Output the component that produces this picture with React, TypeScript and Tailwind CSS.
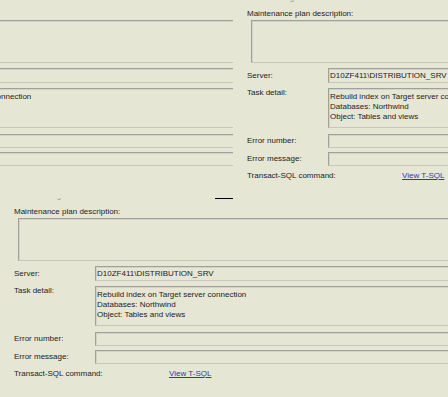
const Box = ({ className = "", children }: { className?: string; children?: React.ReactNode }) => (
    <div
        className={`border-t border-l border-b border-t-[#a1a19a] border-l-[#a1a19a] border-b-[#c7c7be] shadow-[inset_1px_1px_0_#d2d2c8] ${className}`}
    >
        {children}
    </div>
);

const Form = ({ mark = false }: { mark?: boolean }) => {
    return (
        <div className="w-[448px] shrink-0 h-full flex flex-col whitespace-nowrap text-[8px] leading-[10px] text-[#1c1c1c] font-['Liberation_Sans',Arial,sans-serif]">
            <div className="h-[3px] overflow-hidden flex items-end pl-[10px]">
                <span className="w-[205px] shrink-0 leading-[10px] text-[#9a9a94]">Databases log file</span>
                {mark && <div className="w-[18px] h-px bg-black self-start" />}
            </div>
            <div className="ml-[14px] mt-[6px] h-[10px]">Maintenance plan description:</div>
            <Box className="ml-[18px] mt-px h-[43px]" />
            <div className="mt-[5px] flex h-[15px] pl-[14px]">
                <div className="w-[81px] flex items-center">Server:</div>
                <Box className="flex-1 flex items-center pl-px">D10ZF411\DISTRIBUTION_SRV</Box>
            </div>
            <div className="mt-[5px] flex h-[40px] pl-[14px]">
                <div className="w-[81px]">Task detail:</div>
                <Box className="flex-1 pt-[3px] pl-px">
                    <div>Rebuild index on Target server connection</div>
                    <div>Databases: Northwind</div>
                    <div>Object: Tables and views</div>
                </Box>
            </div>
            <div className="mt-[6px] flex h-[14px] pl-[14px]">
                <div className="w-[81px] flex items-center">Error number:</div>
                <Box className="flex-1" />
            </div>
            <div className="mt-[4px] flex h-[14px] pl-[14px]">
                <div className="w-[81px] flex items-center">Error message:</div>
                <Box className="flex-1" />
            </div>
            <div className="mt-[5px] flex h-[10px] pl-[14px]">
                <div className="w-[81px] shrink-0">Transact-SQL command:</div>
                <a className="ml-[74px] text-[#3434c4] underline">View T-SQL</a>
            </div>
        </div>
    );
};

const App = () => {
    return (
        <div className="w-[448px] h-[397px] overflow-hidden bg-[#e6e6d5]">
            <div className="h-[198px] overflow-hidden">
                <div className="flex h-full -ml-[215px]">
                    <Form />
                    <Form />
                </div>
            </div>
            <div className="h-[199px] overflow-hidden">
                <Form mark />
            </div>
        </div>
    );
};

export default App;
